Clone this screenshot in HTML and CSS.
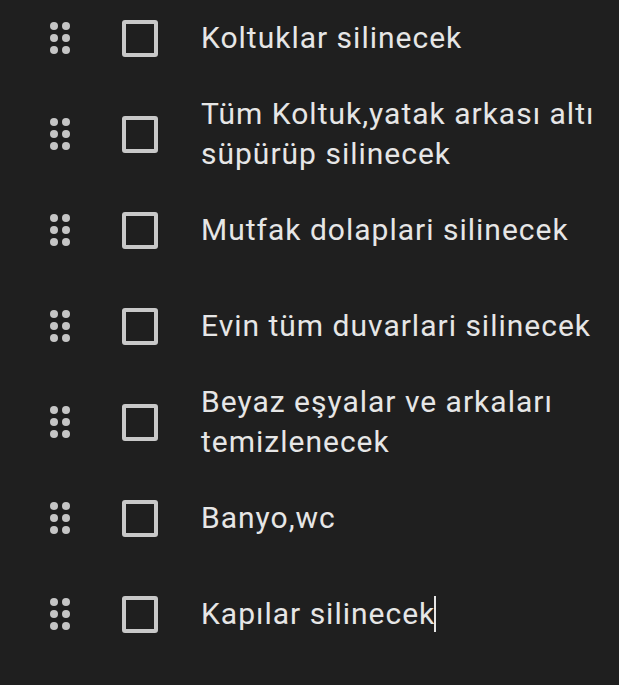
FILE: index.html
```html
<!DOCTYPE html>
<html>
<head>
<meta charset="utf-8">
<link rel="stylesheet" href="styles.css">
</head>
<body>
<div class="list">
  <div class="row"><span class="handle"><i></i><i></i><i></i><i></i><i></i><i></i></span><span class="box"></span><span class="text">Koltuklar silinecek</span></div>
  <div class="row"><span class="handle"><i></i><i></i><i></i><i></i><i></i><i></i></span><span class="box"></span><span class="text">Tüm Koltuk,yatak arkası altı süpürüp silinecek</span></div>
  <div class="row"><span class="handle"><i></i><i></i><i></i><i></i><i></i><i></i></span><span class="box"></span><span class="text">Mutfak dolaplari silinecek</span></div>
  <div class="row"><span class="handle"><i></i><i></i><i></i><i></i><i></i><i></i></span><span class="box"></span><span class="text">Evin tüm duvarlari silinecek</span></div>
  <div class="row"><span class="handle"><i></i><i></i><i></i><i></i><i></i><i></i></span><span class="box"></span><span class="text">Beyaz eşyalar ve arkaları temizlenecek</span></div>
  <div class="row"><span class="handle"><i></i><i></i><i></i><i></i><i></i><i></i></span><span class="box"></span><span class="text">Banyo,wc</span></div>
  <div class="row"><span class="handle"><i></i><i></i><i></i><i></i><i></i><i></i></span><span class="box"></span><span class="text">Kapılar silinecek<span class="caret"></span></span></div>
</div>
</body>
</html>
```
FILE: styles.css
```css
html, body {
  margin: 0;
  padding: 0;
  background: #1f1f1f;
  height: 100%;
  overflow: hidden;
}
.list {
  margin-top: -10px;
  display: flex;
  flex-direction: column;
}
.row {
  height: 96px;
  display: flex;
  align-items: center;
}
.handle {
  margin-left: 50px;
  width: 20px;
  display: grid;
  grid-template-columns: 8px 8px;
  column-gap: 4px;
  row-gap: 4px;
}
.handle i {
  width: 8px;
  height: 8px;
  border-radius: 50%;
  background: #c6c6c6;
}
.box {
  margin-left: 52px;
  width: 28px;
  height: 29px;
  border: 4px solid #c8c8c8;
  border-radius: 3px;
  flex: none;
}
.text {
  margin-left: 43px;
  width: 410px;
  font-family: Roboto, "Open Sans", sans-serif;
  font-size: 30px;
  letter-spacing: 1px;
  line-height: 40px;
  color: #e6e6e6;
}
.caret {
  display: inline-block;
  width: 2px;
  height: 36px;
  background: #e6e6e6;
  vertical-align: -8px;
  margin-left: -1px;
}
```
